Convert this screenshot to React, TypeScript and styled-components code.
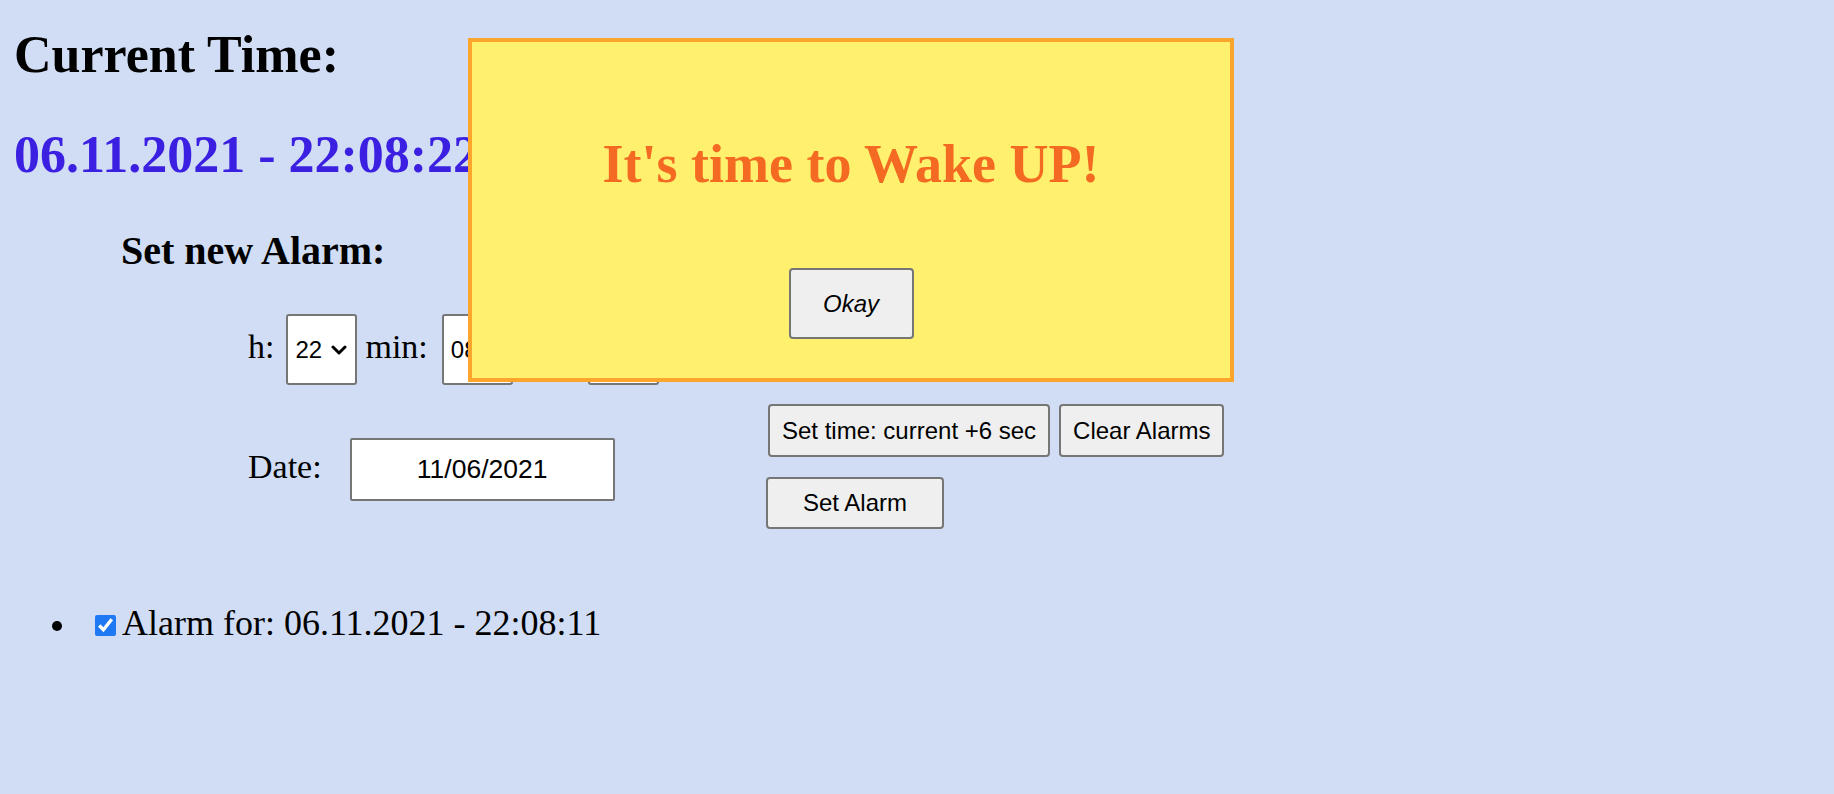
import React from "react";
import styled, { createGlobalStyle } from "styled-components";

const GlobalStyle = createGlobalStyle`
  html, body {
    margin: 0;
    padding: 0;
    background: #d0ddf4;
  }
  body {
    font-family: "Liberation Serif", "Times New Roman", serif;
    color: #000;
  }
`;

const Page = styled.main`
  position: relative;
  box-sizing: border-box;
  min-height: 794px;
  padding: 25px 0 0 14px;
`;

const Heading = styled.h1`
  margin: 0;
  font-size: 52px;
  line-height: 60px;
  font-weight: 700;
`;

const Clock = styled.div`
  margin-top: 40px;
  font-size: 52px;
  line-height: 60px;
  font-weight: 700;
  color: #3b20e2;
  white-space: nowrap;
`;

const AlarmSection = styled.section`
  margin-left: 107px;
`;

const SubHeading = styled.h2`
  margin: 43px 0 0;
  font-size: 40px;
  line-height: 46px;
  font-weight: 700;
`;

const Form = styled.div`
  display: grid;
  grid-template-columns: 520px auto;
  margin: 40px 0 0 127px;
`;

const Fields = styled.div`
  display: flex;
  flex-direction: column;
`;

const FieldRow = styled.div<{ $gap?: number }>`
  display: flex;
  align-items: baseline;
  margin-top: ${(p) => p.$gap ?? 0}px;
`;

const Label = styled.label<{ $first?: boolean; $after?: number }>`
  font-size: 34px;
  margin-left: ${(p) => (p.$first ? 0 : 8)}px;
  margin-right: ${(p) => p.$after ?? 14}px;
  white-space: nowrap;
`;

const SelectWrap = styled.span`
  position: relative;
  display: inline-block;
`;

const Select = styled.select`
  appearance: none;
  -webkit-appearance: none;
  box-sizing: border-box;
  width: 71px;
  height: 71px;
  margin: 0;
  padding: 0 0 0 7px;
  border: 2px solid #767676;
  border-radius: 3px;
  background: #fff;
  color: #000;
  font-family: "Liberation Sans", Arial, sans-serif;
  font-size: 24px;
`;

const Chevron = styled.svg`
  position: absolute;
  right: 10px;
  top: 31px;
  width: 16px;
  height: 10px;
  pointer-events: none;
`;

const DateInput = styled.input`
  box-sizing: border-box;
  width: 265px;
  height: 63px;
  margin: 0;
  padding: 0;
  border: 2px solid #767676;
  border-radius: 2px;
  background: #fff;
  color: #000;
  text-align: center;
  font-family: "Liberation Sans", Arial, sans-serif;
  font-size: 26.5px;
`;

const Actions = styled.div`
  display: flex;
  flex-direction: column;
  align-items: flex-start;
  padding-top: 90px;
`;

const ActionRow = styled.div<{ $gap?: number; $shift?: number }>`
  display: flex;
  gap: 9px;
  margin-top: ${(p) => p.$gap ?? 0}px;
  margin-left: ${(p) => p.$shift ?? 0}px;
`;

const Button = styled.button<{ $width?: number; $height?: number }>`
  box-sizing: border-box;
  height: ${(p) => p.$height ?? 53}px;
  ${(p) => (p.$width ? `width: ${p.$width}px;` : "")}
  margin: 0;
  padding: 0 12px;
  border: 2px solid #767676;
  border-radius: 4px;
  background: #efefef;
  color: #000;
  font-family: "Liberation Sans", Arial, sans-serif;
  font-size: 24px;
  white-space: nowrap;
`;

const AlarmList = styled.ul`
  list-style: none;
  margin: 74px 0 0;
  padding: 0;
`;

const AlarmItem = styled.li`
  display: flex;
  align-items: center;
  height: 40px;
  font-size: 36px;
  line-height: 40px;
  white-space: nowrap;

  &::before {
    content: "";
    width: 10px;
    height: 10px;
    border-radius: 50%;
    background: #000;
    margin: 6px 33px 0 38px;
  }
`;

const Check = styled.input`
  width: 21px;
  height: 21px;
  margin: 4px 6px 0 0;
  accent-color: #1f78f4;
`;

const Modal = styled.div`
  position: absolute;
  left: 468px;
  top: 38px;
  box-sizing: border-box;
  width: 766px;
  height: 344px;
  display: flex;
  flex-direction: column;
  align-items: center;
  padding-top: 92px;
  border: 4px solid #fba52c;
  background: #fff16d;
`;

const ModalTitle = styled.h1`
  margin: 0 0 74px;
  font-size: 54px;
  line-height: 60px;
  font-weight: 700;
  color: #f46a22;
  white-space: nowrap;
`;

const OkayButton = styled(Button)`
  width: 125px;
  height: 71px;
  font-style: italic;
`;

const hours = Array.from({ length: 24 }, (_, i) => String(i).padStart(2, "0"));
const sixty = Array.from({ length: 60 }, (_, i) => String(i).padStart(2, "0"));

function TimeSelect({ value, options }: { value: string; options: string[] }) {
  return (
    <SelectWrap>
      <Select defaultValue={value}>
        {options.map((o) => (
          <option key={o} value={o}>
            {o}
          </option>
        ))}
      </Select>
      <Chevron viewBox="0 0 16 10">
        <path d="M2 2 L8 8 L14 2" fill="none" stroke="#000" strokeWidth="3" strokeLinecap="round" strokeLinejoin="round" />
      </Chevron>
    </SelectWrap>
  );
}

export default function App() {
  return (
    <>
      <GlobalStyle />
      <Page>
        <Heading>Current Time:</Heading>
        <Clock>06.11.2021 - 22:08:22</Clock>

        <AlarmSection>
          <SubHeading>Set new Alarm:</SubHeading>
          <Form>
            <Fields>
              <FieldRow>
                <Label $first $after={12}>h:</Label>
                <TimeSelect value="22" options={hours} />
                <Label $after={14}>min:</Label>
                <TimeSelect value="08" options={sixty} />
                <Label>sec:</Label>
                <TimeSelect value="17" options={sixty} />
              </FieldRow>
              <FieldRow $gap={53}>
                <Label $first $after={28}>Date:</Label>
                <DateInput type="text" defaultValue="11/06/2021" />
              </FieldRow>
            </Fields>
            <Actions>
              <ActionRow>
                <Button>Set time: current +6 sec</Button>
                <Button>Clear Alarms</Button>
              </ActionRow>
              <ActionRow $gap={20} $shift={-2}>
                <Button $width={178} $height={52}>Set Alarm</Button>
              </ActionRow>
            </Actions>
          </Form>
        </AlarmSection>

        <AlarmList>
          <AlarmItem>
            <Check type="checkbox" defaultChecked />
            Alarm for: 06.11.2021 - 22:08:11
          </AlarmItem>
        </AlarmList>

        <Modal role="alertdialog">
          <ModalTitle>It's time to Wake UP!</ModalTitle>
          <OkayButton>Okay</OkayButton>
        </Modal>
      </Page>
    </>
  );
}
